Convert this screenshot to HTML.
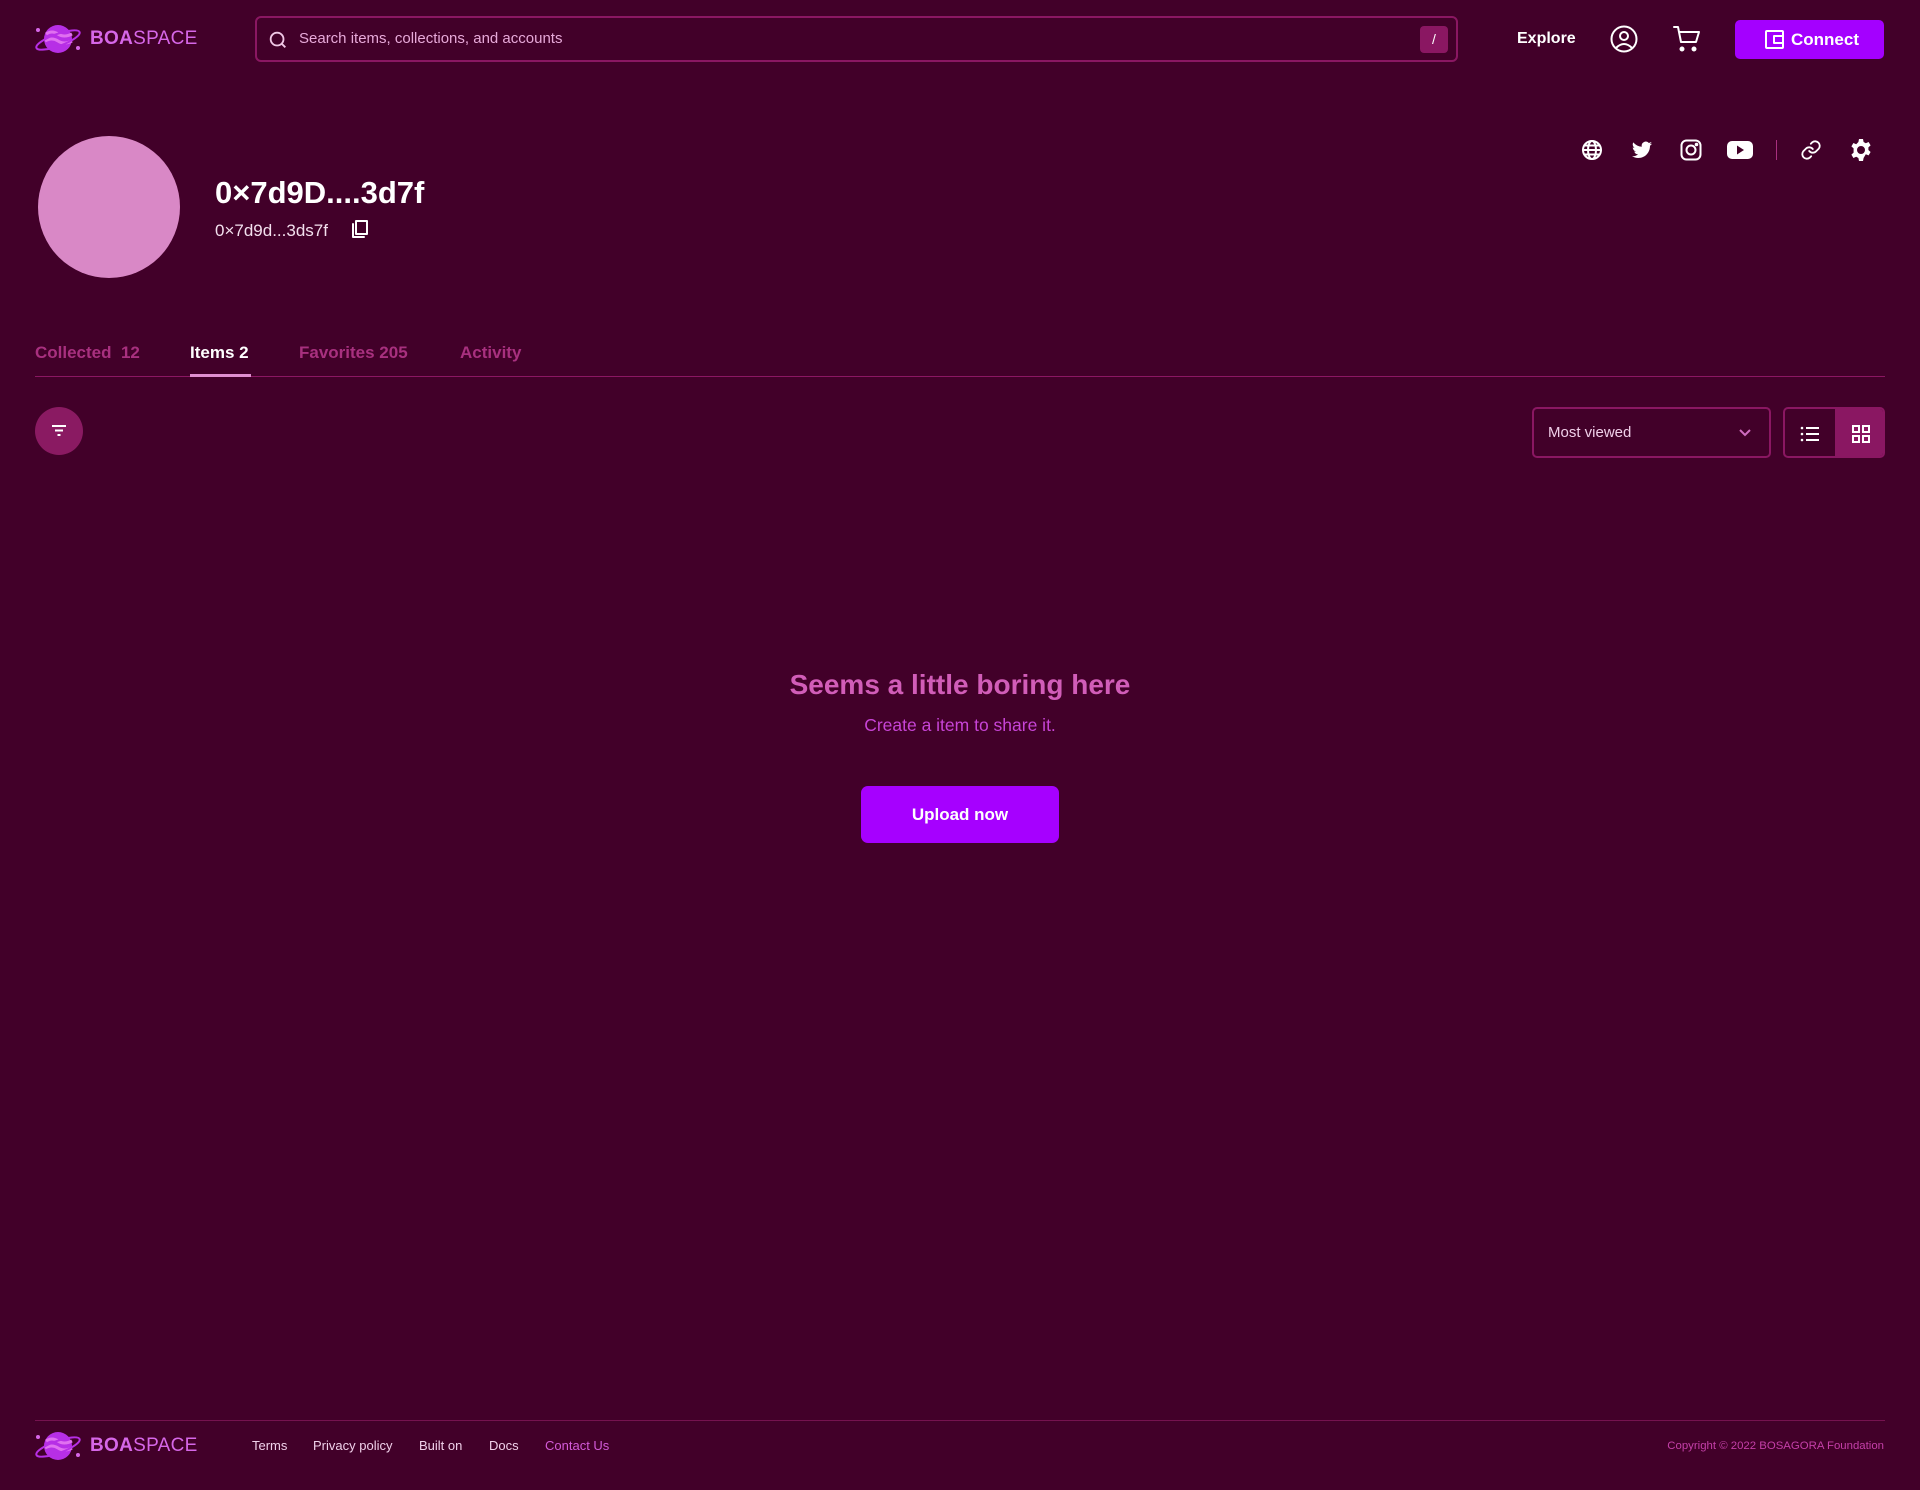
<!DOCTYPE html>
<html><head><meta charset="utf-8"><style>
*{box-sizing:border-box;margin:0;padding:0}
body{width:1920px;height:1490px;background:#420029;font-family:"Liberation Sans",sans-serif;color:#fff;position:relative;overflow:hidden}
.a{position:absolute}
.logo{display:flex;align-items:center;gap:8px}
.logo b{font-size:19px;color:#d667e8;letter-spacing:0.3px}
.logo span{font-weight:normal;color:#d667e8}
.search{left:255px;top:16px;width:1203px;height:46px;border:2px solid #8a1762;border-radius:6px}
.tab{top:343px;font-size:17px;font-weight:bold;color:#a8307f}
.ic{stroke:#fff;fill:none;stroke-width:2;stroke-linecap:round;stroke-linejoin:round}
.fl{font-size:13px;color:#f0d0ea;top:1438px}
</style></head><body>
<!-- header -->
<div class="a logo" style="left:34px;top:22px">
<svg width="48" height="34" viewBox="0 0 48 34"><circle cx="24" cy="17" r="14" fill="#b72fe6"/><path d="M12 12q6-4 12 0t14 0M11 19q7-4 13 0t14 0" stroke="#e070f0" stroke-width="3" fill="none"/><ellipse cx="24" cy="18" rx="23" ry="6" transform="rotate(-20 24 18)" fill="none" stroke="#b72fe6" stroke-width="2"/><circle cx="4" cy="8" r="2" fill="#d667e8"/><circle cx="44" cy="26" r="2" fill="#d667e8"/></svg>
<b>BOA<span>SPACE</span></b></div>
<div class="a search">
<svg class="a" style="left:10px;top:11px" width="22" height="22" viewBox="0 0 24 24"><circle cx="11" cy="11" r="7" stroke="#f0c8e6" stroke-width="2" fill="none"/><path d="M16 16l4 4" stroke="#f0c8e6" stroke-width="2"/></svg>
<div class="a" style="left:42px;top:12px;font-size:15px;color:#e7a9d9">Search items, collections, and accounts</div>
<div class="a" style="right:8px;top:8px;width:28px;height:27px;background:#8a1762;border-radius:4px;text-align:center;line-height:27px;font-size:14px;color:#fff">/</div>
</div>
<div class="a" style="left:1517px;top:30px;font-size:16px;font-weight:bold">Explore</div>
<svg class="a ic" style="left:1609px;top:24px" width="30" height="30" viewBox="0 0 30 30"><circle cx="15" cy="15" r="12.5"/><circle cx="15" cy="12" r="4"/><path d="M7 24q8-8 16 0"/></svg>
<svg class="a ic" style="left:1672px;top:24px" width="30" height="30" viewBox="0 0 30 30"><path d="M2 3h4l3 15h15l3-10H8"/><circle cx="10" cy="25" r="1.5" fill="#fff"/><circle cx="22" cy="25" r="1.5" fill="#fff"/></svg>
<div class="a" style="left:1735px;top:20px;width:149px;height:39px;background:#a400ff;border-radius:5px;font-size:17px;font-weight:bold;line-height:39px;padding-left:56px">Connect
<svg class="a ic" style="left:30px;top:10px" width="19" height="19" viewBox="0 0 19 19"><rect x="1" y="1" width="17" height="17" rx="1"/><rect x="9" y="6" width="9" height="7"/></svg></div>

<!-- profile -->
<div class="a" style="left:38px;top:136px;width:142px;height:142px;border-radius:50%;background:#d988c6"></div>
<div class="a" style="left:215px;top:175px;font-size:31px;font-weight:bold;color:#fff">0×7d9D....3d7f</div>
<div class="a" style="left:215px;top:221px;font-size:17px;color:#f3e0ee">0×7d9d...3ds7f</div>
<svg class="a ic" style="left:350px;top:219px" width="20" height="20" viewBox="0 0 20 20" stroke-width="1.6"><rect x="6" y="2" width="11" height="13"/><path d="M3 5v13h11"/></svg>

<svg class="a ic" style="left:1581px;top:139px" width="22" height="22" viewBox="0 0 22 22" stroke-width="1.6"><circle cx="11" cy="11" r="9"/><ellipse cx="11" cy="11" rx="4" ry="9"/><path d="M2 11h18M3.5 6.5h15M3.5 15.5h15"/></svg>
<svg class="a" style="left:1630px;top:139px" width="24" height="22" viewBox="0 0 24 24"><path fill="#fff" d="M23 5a9 9 0 01-2.6.7 4.5 4.5 0 002-2.5 9 9 0 01-2.9 1.1A4.5 4.5 0 0011.8 8.4 12.8 12.8 0 012.5 3.7a4.5 4.5 0 001.4 6 4.5 4.5 0 01-2-.6 4.5 4.5 0 003.6 4.5 4.5 4.5 0 01-2 .1 4.5 4.5 0 004.2 3.1A9 9 0 011 18.7a12.8 12.8 0 006.9 2c8.3 0 12.8-6.9 12.8-12.8v-.6A9 9 0 0023 5z"/></svg>
<svg class="a ic" style="left:1680px;top:139px" width="22" height="22" viewBox="0 0 22 22"><rect x="1.5" y="1.5" width="19" height="19" rx="5"/><circle cx="11" cy="11" r="4.5"/><circle cx="16.5" cy="5.5" r=".8" fill="#fff"/></svg>
<svg class="a" style="left:1727px;top:140px" width="26" height="20" viewBox="0 0 26 20"><rect x="0" y="1" width="26" height="18" rx="5" fill="#fff"/><path d="M10 5.5v9l7-4.5z" fill="#420029"/></svg>
<div class="a" style="left:1776px;top:140px;width:1px;height:20px;background:#a8307f"></div>
<svg class="a ic" style="left:1800px;top:139px" width="22" height="22" viewBox="0 0 24 24"><path d="M10 13a5 5 0 007.5.5l3-3a5 5 0 00-7-7l-1.7 1.7"/><path d="M14 11a5 5 0 00-7.5-.5l-3 3a5 5 0 007 7l1.7-1.7"/></svg>
<svg class="a" style="left:1849px;top:138px" width="24" height="24" viewBox="0 0 24 24"><path fill="#fff" fill-rule="evenodd" d="M10 1h4l.6 3 2.2 1.2 2.8-1.2 2 3.4-2.2 2v2.6l2.2 2-2 3.4-2.8-1.2L14.6 20 14 23h-4l-.6-3-2.2-1.2-2.8 1.2-2-3.4 2.2-2V10.4L2.4 8.4l2-3.4 2.8 1.2L9.4 4zM12 8a4 4 0 100 8 4 4 0 000-8z"/></svg>

<!-- tabs -->
<div class="a tab" style="left:35px">Collected&nbsp; 12</div>
<div class="a tab" style="left:190px;color:#fff">Items 2</div>
<div class="a tab" style="left:299px">Favorites 205</div>
<div class="a tab" style="left:460px">Activity</div>
<div class="a" style="left:35px;top:376px;width:1850px;height:1px;background:#8a1762"></div>
<div class="a" style="left:190px;top:374px;width:61px;height:3px;background:#e08fd0"></div>

<div class="a" style="left:35px;top:407px;width:48px;height:48px;border-radius:50%;background:#8a1a62"></div>
<svg class="a" style="left:49px;top:421px" width="20" height="20" viewBox="0 0 20 20"><path d="M3 5h14M6 9.5h8M8.5 14h3" stroke="#fff" stroke-width="2"/></svg>

<div class="a" style="left:1532px;top:407px;width:239px;height:51px;border:2px solid #8a1762;border-radius:5px">
<div class="a" style="left:14px;top:15px;font-size:15px;color:#f0cfe9">Most viewed</div>
<svg class="a" style="left:204px;top:18px" width="14" height="12" viewBox="0 0 14 12"><path d="M2 3l5 5 5-5" stroke="#d06cc0" stroke-width="2" fill="none"/></svg>
</div>
<div class="a" style="left:1783px;top:407px;width:102px;height:51px;border:2px solid #8a1762;border-radius:5px;overflow:hidden">
<div class="a" style="left:50px;top:0;width:52px;height:51px;background:#8a1762"></div>
<svg class="a" style="left:15px;top:15px" width="20" height="20" viewBox="0 0 20 20"><g fill="#fff"><circle cx="2" cy="4" r="1.3"/><circle cx="2" cy="10" r="1.3"/><circle cx="2" cy="16" r="1.3"/></g><path d="M6 4h13M6 10h13M6 16h13" stroke="#fff" stroke-width="2"/></svg>
<svg class="a" style="left:66px;top:15px" width="20" height="20" viewBox="0 0 20 20" fill="none" stroke="#fff" stroke-width="2"><rect x="2" y="2" width="6" height="6"/><rect x="12" y="2" width="6" height="6"/><rect x="2" y="12" width="6" height="6"/><rect x="12" y="12" width="6" height="6"/></svg>
</div>

<!-- empty -->
<div class="a" style="left:0;width:1920px;top:669px;text-align:center;font-size:28px;font-weight:bold;color:#d15db8">Seems a little boring here</div>
<div class="a" style="left:0;width:1920px;top:715px;text-align:center;font-size:17.5px;color:#c744d6">Create a item to share it.</div>
<div class="a" style="left:861px;top:786px;width:198px;height:57px;background:#a600ff;border-radius:7px;text-align:center;line-height:57px;font-size:17px;font-weight:bold">Upload now</div>

<!-- footer -->
<div class="a" style="left:35px;top:1420px;width:1850px;height:1px;background:#75124f"></div>
<div class="a logo" style="left:34px;top:1429px">
<svg width="48" height="34" viewBox="0 0 48 34"><circle cx="24" cy="17" r="14" fill="#b72fe6"/><path d="M12 12q6-4 12 0t14 0M11 19q7-4 13 0t14 0" stroke="#e070f0" stroke-width="3" fill="none"/><ellipse cx="24" cy="18" rx="23" ry="6" transform="rotate(-20 24 18)" fill="none" stroke="#b72fe6" stroke-width="2"/><circle cx="4" cy="8" r="2" fill="#d667e8"/><circle cx="44" cy="26" r="2" fill="#d667e8"/></svg>
<b>BOA<span>SPACE</span></b></div>
<div class="a fl" style="left:252px">Terms</div>
<div class="a fl" style="left:313px">Privacy policy</div>
<div class="a fl" style="left:419px">Built on</div>
<div class="a fl" style="left:489px">Docs</div>
<div class="a fl" style="left:545px;color:#d35ad8">Contact Us</div>
<div class="a" style="right:36px;top:1440px;font-size:11.4px;color:#c43fa8">Copyright © 2022 BOSAGORA Foundation</div>
</body></html>
